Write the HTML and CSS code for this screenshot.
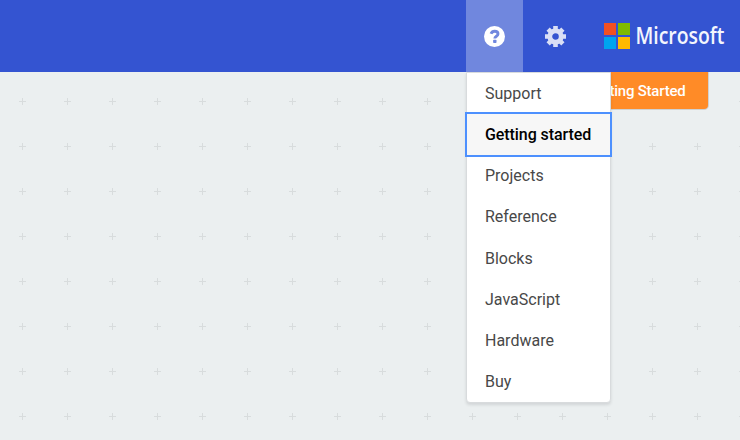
FILE: index.html
```
<!DOCTYPE html>
<html lang="en">
<head>
<meta charset="utf-8">
<title>Editor</title>
<link rel="stylesheet" href="styles.css">
</head>
<body>
<header class="topbar">
  <div class="help" role="button" aria-label="Help">
    <svg class="icon" viewBox="0 0 21 21"><circle cx="10.5" cy="10.5" r="10.5" fill="#fff"/><path d="M7 7.7C7.7 6 9 5.2 10.6 5.2c2 0 3.4 1.1 3.4 2.7 0 2.4-3.2 2.2-3.2 4.6" fill="none" stroke="#7087de" stroke-width="2.9"/><rect x="9.1" y="13.7" width="3.4" height="3.3" rx=".8" fill="#7087de"/></svg>
    <nav class="menu">
      <a class="item">Support</a>
      <a class="item active">Getting started</a>
      <a class="item">Projects</a>
      <a class="item">Reference</a>
      <a class="item">Blocks</a>
      <a class="item">JavaScript</a>
      <a class="item">Hardware</a>
      <a class="item">Buy</a>
    </nav>
  </div>
  <div class="settings" role="button" aria-label="Settings">
    <svg class="icon" viewBox="0 0 21 21" fill="none" stroke="#d9dff6"><circle cx="10.5" cy="10.5" r="5.7" stroke-width="4.8"/><path d="M10.5 0v5M10.5 16v5M0 10.5h5M16 10.5h5M3.1 3.1l3.5 3.5M14.4 14.4l3.5 3.5M17.9 3.1l-3.5 3.5M6.6 14.4l-3.5 3.5" stroke-width="4.6"/></svg>
  </div>
  <div class="brand">
    <div class="squares"><i class="red"></i><i class="green"></i><i class="blue"></i><i class="yellow"></i></div>
    <svg class="word" viewBox="0 0 90 30"><text x="-0.5" y="23.3" textLength="89" lengthAdjust="spacingAndGlyphs">Microsoft</text></svg>
  </div>
</header>
<main class="workspace"><div class="tutorial">Getting Started</div></main>
</body>
</html>
```
FILE: styles.css
```
body {
  margin: 0;
  height: 440px;
  overflow: hidden;
  display: flex;
  flex-direction: column;
  font-family: Roboto, sans-serif;
}
.topbar {
  height: 72px;
  flex: none;
  display: flex;
  justify-content: flex-end;
  background: #3454d1;
}
.help, .settings {
  display: flex;
  align-items: center;
  justify-content: center;
  width: 57px;
  position: relative;
}
.help { background: #7087de; }
.settings { width: 65px; }
.icon { width: 21px; height: 21px; display: block; }
.brand {
  display: flex;
  align-items: center;
  width: 136px;
  margin-left: 16px;
}
.squares {
  display: grid;
  grid-template-columns: 12px 12.5px;
  grid-template-rows: 12px 12px;
  gap: 1.5px;
}
.red { background: #f25022; }
.green { background: #7fba00; }
.blue { background: #00a4ef; }
.yellow { background: #ffb900; }
.word { width: 90px; height: 30px; margin-left: 6px; overflow: visible; }
.word text {
  font: 600 23px "Open Sans", sans-serif;
  fill: #f4f6fd;
}
.menu {
  position: absolute;
  z-index: 2;
  top: 72px;
  left: 0;
  width: 143px;
  border: 1px solid #d8dbdd;
  border-radius: 0 0 4px 4px;
  background: #fff;
  box-shadow: 0 2px 3px rgba(34, 36, 38, .12);
}
.item {
  display: flex;
  align-items: center;
  height: 41.15px;
  padding-left: 18px;
  font-size: 16px;
  color: #484848;
}
.active {
  font-weight: 500;
  letter-spacing: -.08px;
  color: #000;
  background: #f7f7f7;
  outline: 2px solid #4d90fe;
}
.workspace {
  flex: 1;
  display: flex;
  justify-content: flex-end;
  align-items: flex-start;
  padding-right: 32px;
  background: #ebeff0 url("data:image/svg+xml,%3Csvg xmlns='http://www.w3.org/2000/svg' width='45' height='45'%3E%3Cpath d='M19 29.5h7M22.5 26v7' stroke='%23d8dcdd'/%3E%3C/svg%3E");
}
.tutorial {
  box-sizing: border-box;
  height: 37px;
  padding: 1px 22.5px 0;
  line-height: 37px;
  font-size: 15px;
  font-weight: 500;
  letter-spacing: -.22px;
  color: #fff;
  background: #ff8b27;
  border-radius: 0 0 4px 4px;
  box-shadow: 0 1px 0 #cfd1d2, 1px 0 0 #cfd1d2;
}
```
